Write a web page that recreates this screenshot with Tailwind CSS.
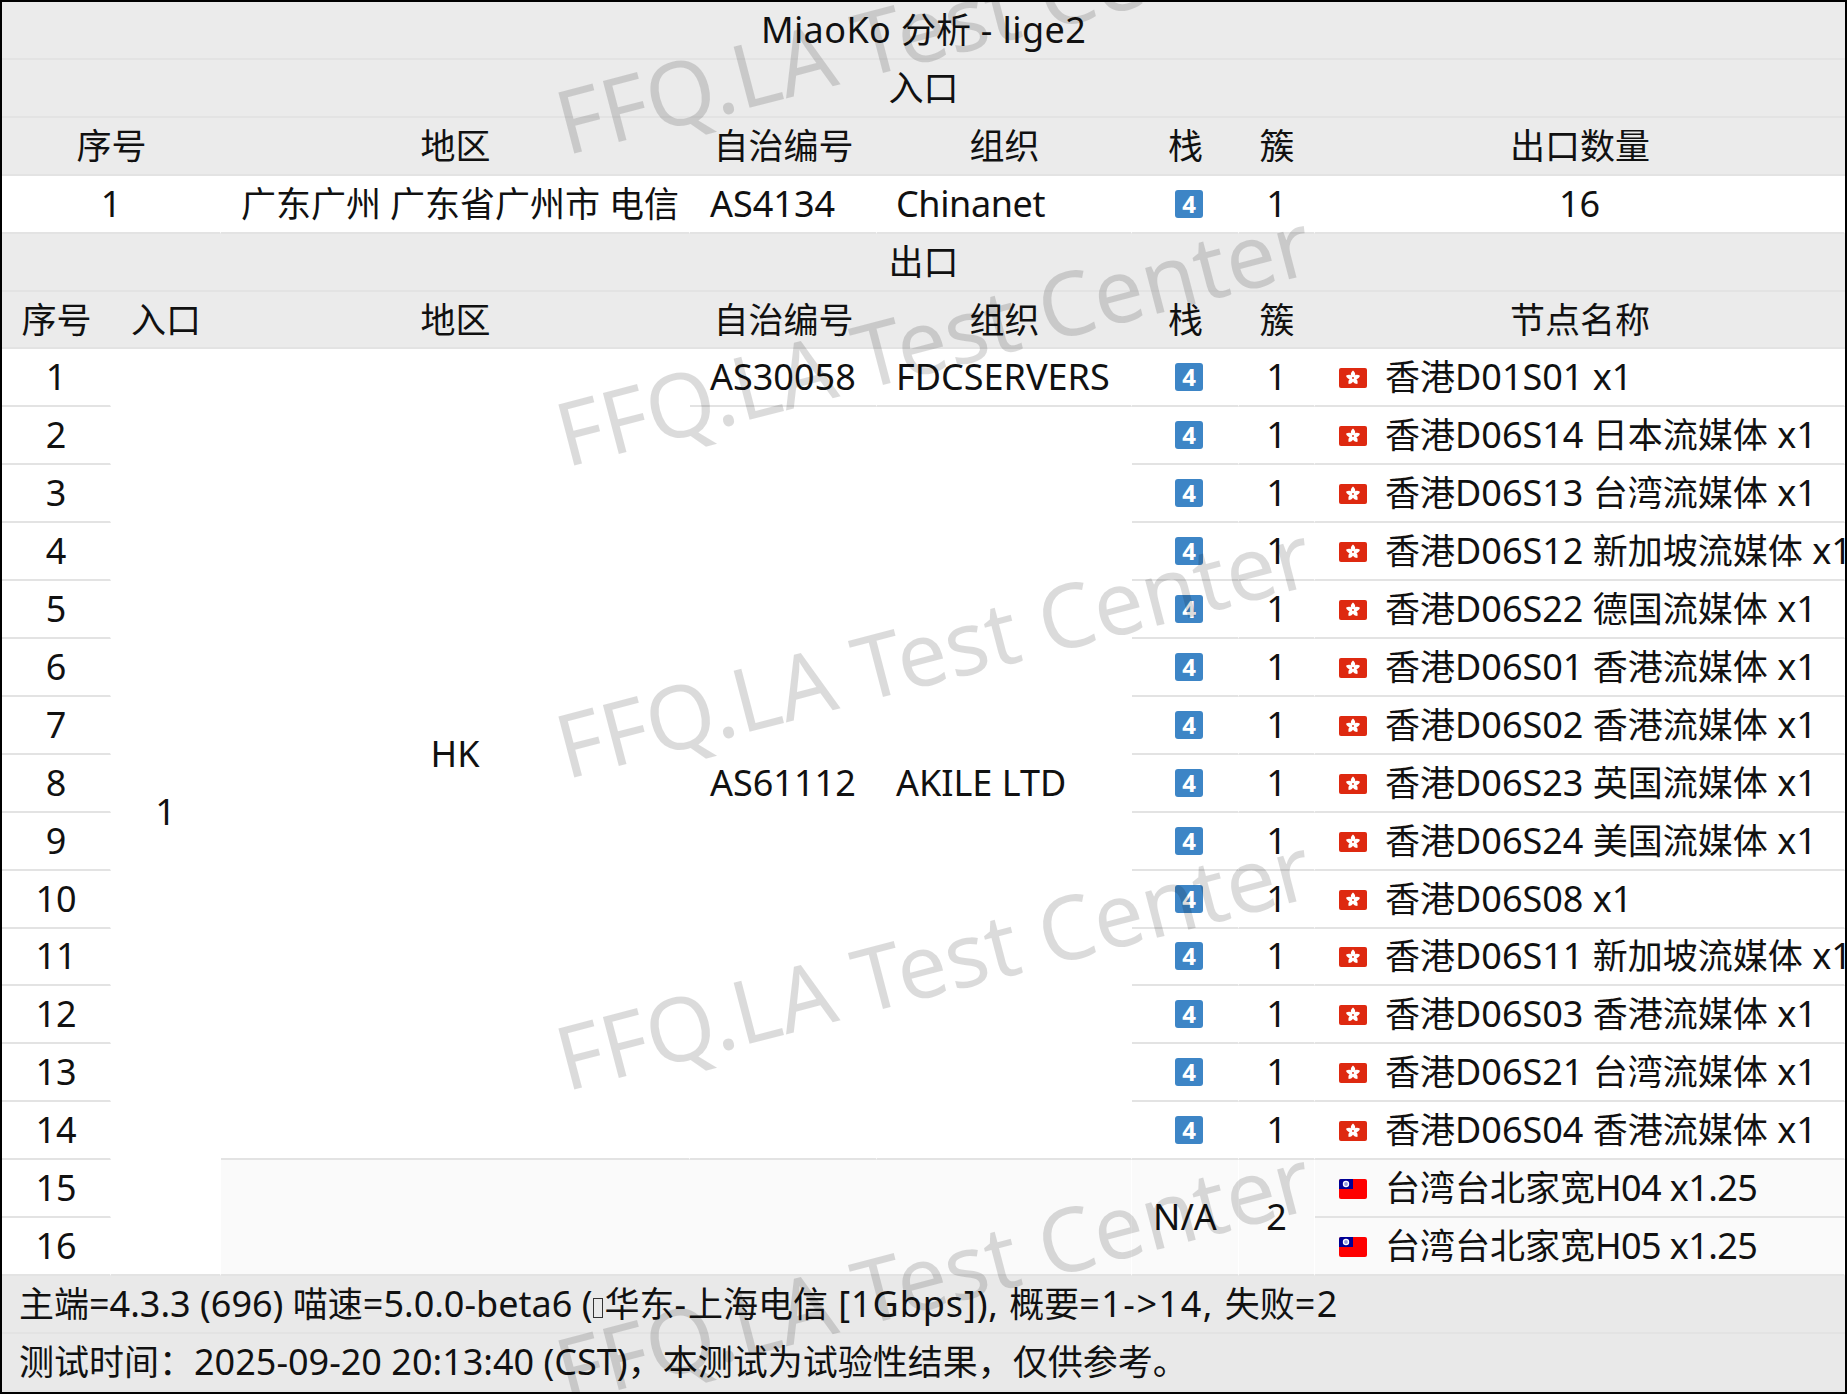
<!DOCTYPE html>
<html lang="zh-CN">
<head>
    <meta charset="UTF-8">
    <script src="https://cdn.jsdelivr.net/npm/@tailwindcss/browser@4"></script>
    <title>MiaoKo 分析 - lige2</title>
</head>
<body class="bg-white">
<!-- flags, drawn once and reused -->
<svg class="hidden">
    <symbol id="hk" viewBox="0 0 28 20">
        <rect width="28" height="20" rx="2" fill="#de2910"/>
        <g fill="#fff">
            <path id="petal" d="M14 10c-2.8-1.6-3-5 0-7.4 3 2.4 2.8 5.8 0 7.4z"/>
            <use href="#petal" transform="rotate(72 14 10)"/>
            <use href="#petal" transform="rotate(144 14 10)"/>
            <use href="#petal" transform="rotate(216 14 10)"/>
            <use href="#petal" transform="rotate(288 14 10)"/>
        </g>
        <circle cx="14" cy="10" r=".9" fill="#de2910"/>
    </symbol>
    <symbol id="tw" viewBox="0 0 28 20">
        <rect width="28" height="20" rx="2" fill="#fe0000"/>
        <path d="M2 0h12v10H0V2a2 2 0 0 1 2-2z" fill="#000095"/>
        <circle cx="7" cy="5" r="3.2" fill="#fff"/>
        <circle cx="7" cy="5" r="1.9" fill="#9aa0e0"/>
    </symbol>
</svg>

<main class="relative w-[1847px] h-[1394px] overflow-hidden border-2 border-black bg-white text-[35px] leading-none text-[#111] font-['Noto_Sans','Noto_Sans_CJK_SC',sans-serif]">
    <table class="table-fixed border-separate border-spacing-0 w-[1843px] whitespace-nowrap [&_td]:h-[57.92px] [&_td]:p-0 [&_td]:text-center [&_td]:border-b-2 [&_td]:border-b-[#e3e3e3] [&_tr]:h-[57.92px]">
        <colgroup>
            <col class="w-[109px]"><col class="w-[110px]"><col class="w-[469px]"><col class="w-[187px]"><col class="w-[255px]"><col class="w-[107px]"><col class="w-[76px]"><col class="w-[530px]">
        </colgroup>
        <tbody class="bg-[#ebebeb]">
        <tr><td colspan="8"><span class="text-[36px] tracking-[0.4px]">MiaoKo </span>分析<span class="text-[36px] tracking-[0.4px]"> - lige2</span></td></tr>
        <tr><td colspan="8">入口</td></tr>
        <tr><td colspan="2">序号</td><td>地区</td><td>自治编号</td><td>组织</td><td>栈</td><td>簇</td><td>出口数量</td></tr>
        </tbody>
        <tbody class="[&_td]:border-r [&_td]:border-r-white text-[36px]">
        <tr>
            <td colspan="2">1</td><td class="text-[35px] pl-[10px]!">广东广州 广东省广州市 电信</td><td class="!text-left pl-[20px]!">AS4134</td><td class="!text-left pl-[19px]! tracking-[-0.4px]">Chinanet</td>
            <td><div class="ml-[43px] flex h-[28px] w-[28px] items-center justify-center rounded-[3px] bg-[#3d85c6] text-[24px] font-bold text-white">4</div></td>
            <td>1</td><td>16</td>
        </tr>
        </tbody>
        <tbody class="bg-[#ebebeb]">
        <tr><td colspan="8">出口</td></tr>
        <tr><td>序号</td><td>入口</td><td>地区</td><td>自治编号</td><td>组织</td><td>栈</td><td>簇</td><td>节点名称</td></tr>
        </tbody>
        <tbody class="[&_td]:border-r [&_td]:border-r-white text-[36px] [&_svg]:h-[20px] [&_svg]:w-[28px] [&_svg]:shrink-0 [&_svg]:inline-block [&_svg]:mr-[18px] [&_svg]:ml-[24px] [&_svg]:align-[2px] [&_b]:font-normal [&_b]:text-[35px]">
        <tr>
            <td>1</td><td rowspan="16">1</td><td rowspan="14">HK</td><td class="!text-left pl-[20px]!">AS30058</td><td class="!text-left pl-[19px]!">FDCSERVERS</td>
            <td><div class="ml-[43px] flex h-[28px] w-[28px] items-center justify-center rounded-[3px] bg-[#3d85c6] text-[24px] font-bold text-white">4</div></td>
            <td>1</td><td class="!text-left"><svg><use href="#hk"/></svg><b>香港</b>D01S01 x1</td>
        </tr>
        <tr>
            <td>2</td><td rowspan="13" class="!text-left pl-[20px]!">AS61112</td><td rowspan="13" class="!text-left pl-[19px]!">AKILE LTD</td>
            <td><div class="ml-[43px] flex h-[28px] w-[28px] items-center justify-center rounded-[3px] bg-[#3d85c6] text-[24px] font-bold text-white">4</div></td>
            <td>1</td><td class="!text-left"><svg><use href="#hk"/></svg><b>香港</b>D06S14 <b>日本流媒体</b> x1</td>
        </tr>
        <tr><td>3</td><td><div class="ml-[43px] flex h-[28px] w-[28px] items-center justify-center rounded-[3px] bg-[#3d85c6] text-[24px] font-bold text-white">4</div></td><td>1</td><td class="!text-left"><svg><use href="#hk"/></svg><b>香港</b>D06S13 <b>台湾流媒体</b> x1</td></tr>
        <tr><td>4</td><td><div class="ml-[43px] flex h-[28px] w-[28px] items-center justify-center rounded-[3px] bg-[#3d85c6] text-[24px] font-bold text-white">4</div></td><td>1</td><td class="!text-left"><svg><use href="#hk"/></svg><b>香港</b>D06S12 <b>新加坡流媒体</b> x1</td></tr>
        <tr><td>5</td><td><div class="ml-[43px] flex h-[28px] w-[28px] items-center justify-center rounded-[3px] bg-[#3d85c6] text-[24px] font-bold text-white">4</div></td><td>1</td><td class="!text-left"><svg><use href="#hk"/></svg><b>香港</b>D06S22 <b>德国流媒体</b> x1</td></tr>
        <tr><td>6</td><td><div class="ml-[43px] flex h-[28px] w-[28px] items-center justify-center rounded-[3px] bg-[#3d85c6] text-[24px] font-bold text-white">4</div></td><td>1</td><td class="!text-left"><svg><use href="#hk"/></svg><b>香港</b>D06S01 <b>香港流媒体</b> x1</td></tr>
        <tr><td>7</td><td><div class="ml-[43px] flex h-[28px] w-[28px] items-center justify-center rounded-[3px] bg-[#3d85c6] text-[24px] font-bold text-white">4</div></td><td>1</td><td class="!text-left"><svg><use href="#hk"/></svg><b>香港</b>D06S02 <b>香港流媒体</b> x1</td></tr>
        <tr><td>8</td><td><div class="ml-[43px] flex h-[28px] w-[28px] items-center justify-center rounded-[3px] bg-[#3d85c6] text-[24px] font-bold text-white">4</div></td><td>1</td><td class="!text-left"><svg><use href="#hk"/></svg><b>香港</b>D06S23 <b>英国流媒体</b> x1</td></tr>
        <tr><td>9</td><td><div class="ml-[43px] flex h-[28px] w-[28px] items-center justify-center rounded-[3px] bg-[#3d85c6] text-[24px] font-bold text-white">4</div></td><td>1</td><td class="!text-left"><svg><use href="#hk"/></svg><b>香港</b>D06S24 <b>美国流媒体</b> x1</td></tr>
        <tr><td>10</td><td><div class="ml-[43px] flex h-[28px] w-[28px] items-center justify-center rounded-[3px] bg-[#3d85c6] text-[24px] font-bold text-white">4</div></td><td>1</td><td class="!text-left"><svg><use href="#hk"/></svg><b>香港</b>D06S08 x1</td></tr>
        <tr><td>11</td><td><div class="ml-[43px] flex h-[28px] w-[28px] items-center justify-center rounded-[3px] bg-[#3d85c6] text-[24px] font-bold text-white">4</div></td><td>1</td><td class="!text-left"><svg><use href="#hk"/></svg><b>香港</b>D06S11 <b>新加坡流媒体</b> x1</td></tr>
        <tr><td>12</td><td><div class="ml-[43px] flex h-[28px] w-[28px] items-center justify-center rounded-[3px] bg-[#3d85c6] text-[24px] font-bold text-white">4</div></td><td>1</td><td class="!text-left"><svg><use href="#hk"/></svg><b>香港</b>D06S03 <b>香港流媒体</b> x1</td></tr>
        <tr><td>13</td><td><div class="ml-[43px] flex h-[28px] w-[28px] items-center justify-center rounded-[3px] bg-[#3d85c6] text-[24px] font-bold text-white">4</div></td><td>1</td><td class="!text-left"><svg><use href="#hk"/></svg><b>香港</b>D06S21 <b>台湾流媒体</b> x1</td></tr>
        <tr><td>14</td><td><div class="ml-[43px] flex h-[28px] w-[28px] items-center justify-center rounded-[3px] bg-[#3d85c6] text-[24px] font-bold text-white">4</div></td><td>1</td><td class="!text-left"><svg><use href="#hk"/></svg><b>香港</b>D06S04 <b>香港流媒体</b> x1</td></tr>
        <tr>
            <td>15</td><td colspan="3" rowspan="2" class="bg-[#fafafa]"></td><td rowspan="2" class="bg-[#fafafa]">N/A</td><td rowspan="2" class="bg-[#fafafa]">2</td>
            <td class="!text-left bg-[#fafafa]"><svg><use href="#tw"/></svg><b>台湾台北家宽</b><span class="tracking-[-0.6px]">H04 x1.25</span></td>
        </tr>
        <tr><td>16</td><td class="!text-left bg-[#fafafa]"><svg><use href="#tw"/></svg><b>台湾台北家宽</b><span class="tracking-[-0.6px]">H05 x1.25</span></td></tr>
        </tbody>
        <tbody class="bg-[#e9e9e9] [&_td]:!text-left [&_td]:pl-[17px]! text-[36px] [&_b]:font-normal [&_b]:text-[35px]">
        <tr><td colspan="8"><b>主端</b>=4.3.3 (696) <b>喵速</b>=5.0.0-beta6 (<span class="mx-[1px] inline-block h-[20px] w-[10px] border border-[#333] align-[-1px]"></span><b>华东</b><span class="tracking-[2px]">-</span><b>上海电信</b><span class="tracking-[0.9px]"> [1Gbps]), </span><b>概要</b><span class="tracking-[1.5px]">=1-&gt;14, </span><b>失败</b><span class="tracking-[1.5px]">=2</span></td></tr>
        <tr><td colspan="8"><b>测试时间：</b>2025-09-20 20:13:40 (CST)<b>，本测试为试验性结果，仅供参考。</b></td></tr>
        </tbody>
    </table>

    <!-- watermark over the table -->
    <div class="pointer-events-none absolute left-[496px] top-[-27px] h-[100px] w-[870px] -rotate-[14.6deg] text-center text-[88.5px] leading-[100px] text-black/[0.14]">FFQ.LA Test Center</div>
    <div class="pointer-events-none absolute left-[496px] top-[285px] h-[100px] w-[870px] -rotate-[14.6deg] text-center text-[88.5px] leading-[100px] text-black/[0.14]">FFQ.LA Test Center</div>
    <div class="pointer-events-none absolute left-[496px] top-[597px] h-[100px] w-[870px] -rotate-[14.6deg] text-center text-[88.5px] leading-[100px] text-black/[0.14]">FFQ.LA Test Center</div>
    <div class="pointer-events-none absolute left-[496px] top-[909px] h-[100px] w-[870px] -rotate-[14.6deg] text-center text-[88.5px] leading-[100px] text-black/[0.14]">FFQ.LA Test Center</div>
    <div class="pointer-events-none absolute left-[496px] top-[1221px] h-[100px] w-[870px] -rotate-[14.6deg] text-center text-[88.5px] leading-[100px] text-black/[0.14]">FFQ.LA Test Center</div>
</main>
</body>
</html>
